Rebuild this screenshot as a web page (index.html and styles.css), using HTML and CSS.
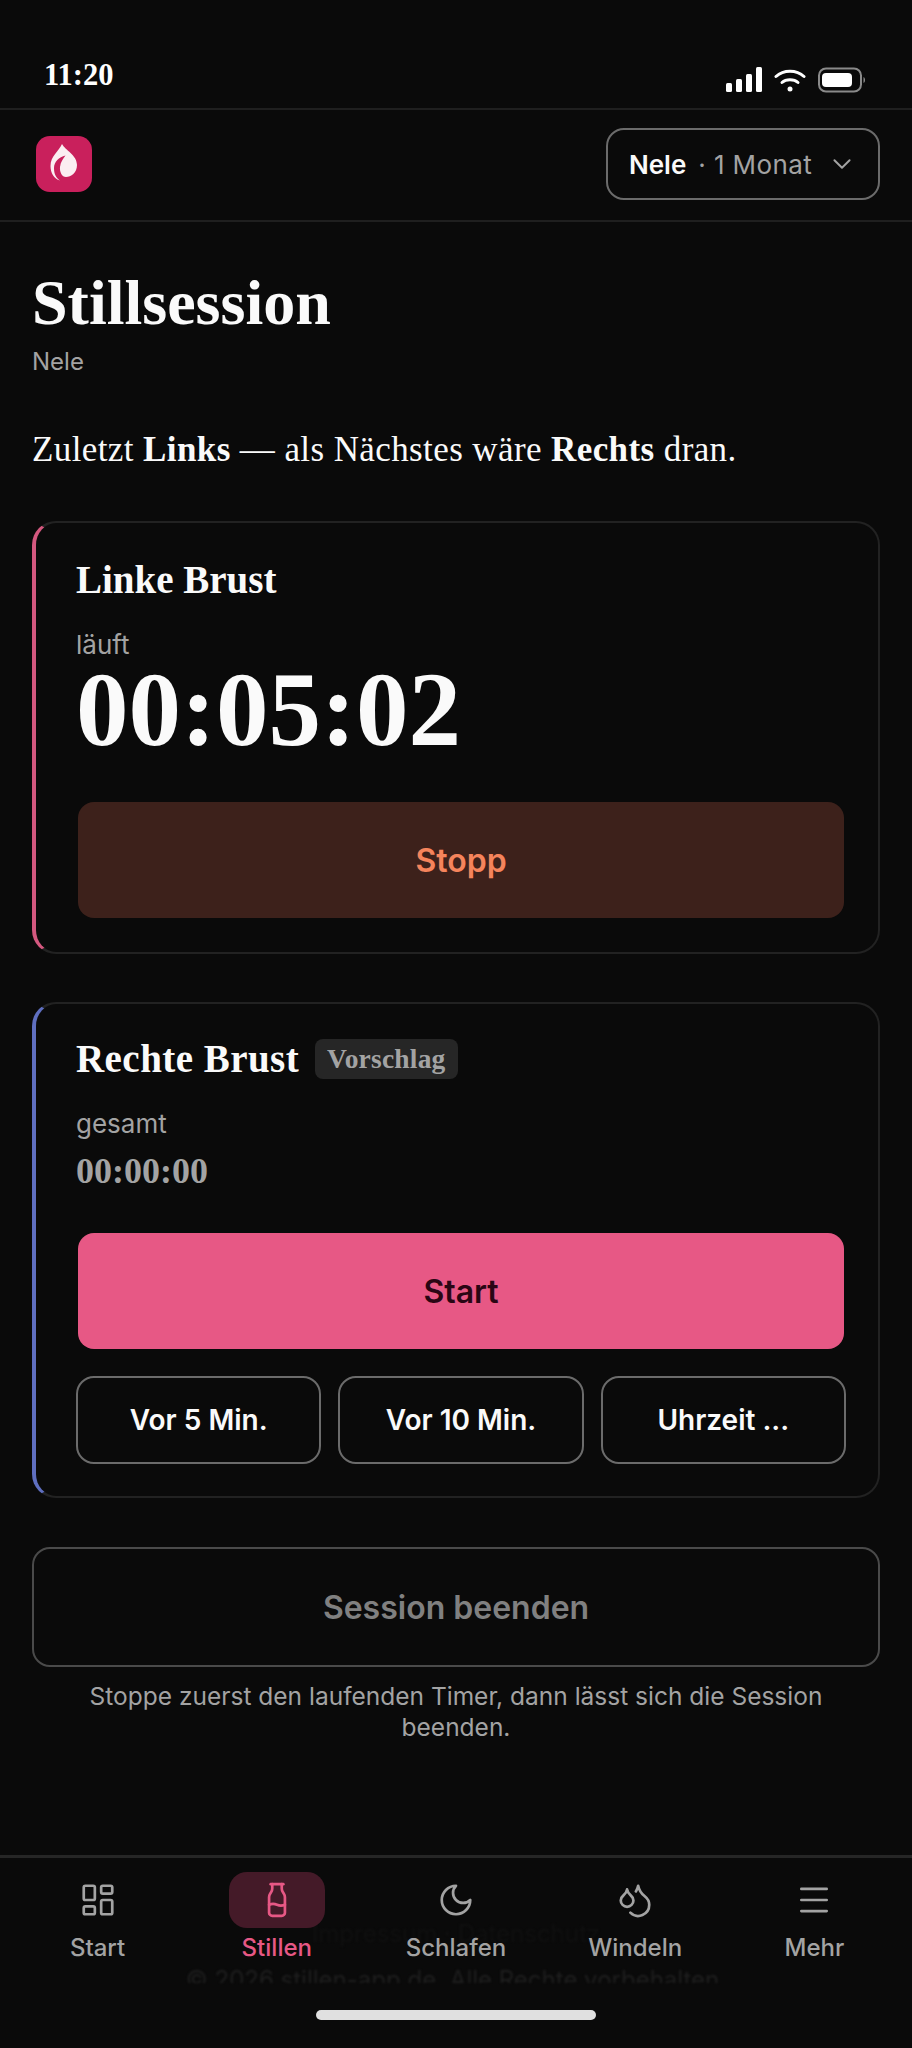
FILE: index.html
```html
<!DOCTYPE html>
<html lang="de">
<head>
  <meta charset="utf-8">
  <title>Stillsession</title>
  <link rel="stylesheet" href="styles.css">
</head>
<body>
  <div class="app">
    <div class="status-bar">
      <span class="status-time">11:20</span>
      <div class="status-icons">
        <svg width="36" height="26" viewBox="0 0 36 26" fill="#fff">
          <rect x="0" y="16" width="6" height="9" rx="1.5"/>
          <rect x="10" y="12" width="6" height="13" rx="1.5"/>
          <rect x="20" y="7" width="6" height="18" rx="1.5"/>
          <rect x="30" y="0" width="6" height="25" rx="1.5"/>
        </svg>
        <svg width="32" height="24" viewBox="0 0 32 24" fill="none" stroke="#fff" stroke-width="3" stroke-linecap="round">
          <path d="M2 8.500C9.500 1.500 22.500 1.500 30 8.500"/>
          <path d="M8 14.500C12 10.800 20 10.800 24 14.500"/>
          <circle cx="16" cy="21" r="2.500" fill="#fff" stroke="none"/>
        </svg>
        <svg width="48" height="26" viewBox="0 0 48 26" fill="none">
          <rect x="1" y="1.500" width="42" height="23" rx="7" stroke="#8a8a8a" stroke-width="2"/>
          <rect x="4" y="6" width="30" height="14" rx="4" fill="#fff"/>
          <path d="M45.500 10v6c1-.5 1.500-1.500 1.500-3s-.5-2.500-1.500-3z" fill="#8a8a8a"/>
        </svg>
      </div>
    </div>

    <header class="top-bar">
      <div class="logo">
        <svg width="56" height="56" viewBox="0 0 56 56">
          <path d="M26 8C29 14 41 19 41 29C41 37 35 41 30 41C26 41 23.500 36 24 31C24.500 26 27 23 29.500 19.500C23 21 18 26 18 32C18 38 20 42 24 44.500C18 43 14.500 37 14.500 30C14.500 20 23 15 26 8Z" fill="#fbeef2"/>
        </svg>
      </div>
      <button class="child-picker">
        <span class="child-name">Nele</span>
        <span class="child-age">· 1 Monat</span>
        <svg width="26" height="26" viewBox="0 0 24 24" fill="none" stroke="#a3a3a3" stroke-width="1.800" stroke-linecap="round" stroke-linejoin="round"><path d="m5 8.500 7 7 7-7"/></svg>
      </button>
    </header>

    <main class="content">
      <h1>Stillsession</h1>
      <p class="subtitle">Nele</p>
      <p class="hint">Zuletzt <b>Links</b> — als Nächstes wäre <b>Rechts</b> dran.</p>

      <section class="card card-left">
        <h2>Linke Brust</h2>
        <div class="timer-label">läuft</div>
        <div class="timer-big">00:05:02</div>
        <button class="btn btn-stop">Stopp</button>
      </section>

      <section class="card card-right">
        <h2>Rechte Brust <span class="tag">Vorschlag</span></h2>
        <div class="timer-label">gesamt</div>
        <div class="timer-small">00:00:00</div>
        <button class="btn btn-start">Start</button>
        <div class="quick-buttons">
          <button class="btn-quick">Vor 5 Min.</button>
          <button class="btn-quick">Vor 10 Min.</button>
          <button class="btn-quick">Uhrzeit ...</button>
        </div>
      </section>

      <button class="btn-end">Session beenden</button>
      <p class="end-note">Stoppe zuerst den laufenden Timer, dann lässt sich die Session beenden.</p>
    </main>

    <nav class="bottom-nav">
      <div class="ghost-footer">
        <span class="ghost-link">Impressum · Datenschutz</span>
        <span>© 2026 stillen-app.de. Alle Rechte vorbehalten.</span>
      </div>
      <div class="nav-items">
        <a class="nav-item">
          <span class="nav-icon">
            <svg class="icon" viewBox="0 0 24 24"><rect x="3" y="3" width="7" height="9" rx="1"/><rect x="14" y="3" width="7" height="5" rx="1"/><rect x="14" y="12" width="7" height="9" rx="1"/><rect x="3" y="16" width="7" height="5" rx="1"/></svg>
          </span>
          Start
        </a>
        <a class="nav-item active">
          <span class="nav-icon">
            <svg class="icon" viewBox="0 0 24 24"><path d="M8 2h8"/><path d="M9 2v2.789a4 4 0 0 1-.672 2.219l-.656.984A4 4 0 0 0 7 10.212V20a2 2 0 0 0 2 2h6a2 2 0 0 0 2-2v-9.789a4 4 0 0 0-.672-2.219l-.656-.984A4 4 0 0 1 15 4.788V2"/><path d="M7 15a6.472 6.472 0 0 1 5 0 6.470 6.470 0 0 0 5 0"/></svg>
          </span>
          Stillen
        </a>
        <a class="nav-item">
          <span class="nav-icon">
            <svg class="icon" viewBox="0 0 24 24"><path d="M12 3a6 6 0 0 0 9 9 9 9 0 1 1-9-9Z"/></svg>
          </span>
          Schlafen
        </a>
        <a class="nav-item">
          <span class="nav-icon">
            <svg class="icon" viewBox="0 0 24 24"><path d="M7 16.300c2.200 0 4-1.830 4-4.050 0-1.160-.57-2.260-1.710-3.190S7.290 6.750 7 5.300c-.29 1.450-1.140 2.840-2.290 3.760S3 11.100 3 12.250c0 2.220 1.800 4.050 4 4.050z"/><path d="M12.560 6.600A10.970 10.970 0 0 0 14 3.020c.5 2.500 2 4.900 4 6.500s3 3.500 3 5.500a6.980 6.980 0 0 1-11.910 4.970"/></svg>
          </span>
          Windeln
        </a>
        <a class="nav-item">
          <span class="nav-icon">
            <svg class="icon" viewBox="0 0 24 24"><path d="M4 5h16"/><path d="M4 12h16"/><path d="M4 19h16"/></svg>
          </span>
          Mehr
        </a>
      </div>
      <div class="home-indicator"></div>
    </nav>
  </div>
</body>
</html>
```

FILE: styles.css
```css
* {
  box-sizing: border-box;
}

html,
body {
  margin: 0;
  padding: 0;
  background-color: #0a0a0a;
}

body {
  font-family: Inter, "Liberation Sans", sans-serif;
  color: #fafafa;
}

button {
  font-family: inherit;
  cursor: pointer;
}

.app {
  width: 912px;
  height: 2048px;
  display: flex;
  flex-direction: column;
  overflow: hidden;
}

/* status bar */
.status-bar {
  height: 110px;
  padding: 57px 46px 0 44px;
  display: flex;
  justify-content: space-between;
  align-items: flex-start;
  border-bottom: 2px solid #1f1f1f;
}

.status-time {
  font-family: "Liberation Serif", serif;
  font-weight: 700;
  font-size: 30.5px;
  line-height: 36px;
  color: #fff;
}

.status-icons {
  display: flex;
  align-items: center;
  gap: 12px;
  margin-top: 10px;
}

/* header */
.top-bar {
  height: 112px;
  padding: 0 32px 2px 36px;
  display: flex;
  justify-content: space-between;
  align-items: center;
  border-bottom: 2px solid #1f1f1f;
}

.logo {
  width: 56px;
  height: 56px;
  border-radius: 14px;
  background-color: #c9205c;
}

.logo svg {
  display: block;
}

.child-picker {
  width: 274px;
  height: 72px;
  padding: 0 23px 0 21px;
  display: flex;
  align-items: center;
  background: none;
  border: 2px solid #6b6b6b;
  border-radius: 18px;
  font-size: 26px;
}

.child-name {
  font-weight: 600;
  color: #fafafa;
}

.child-age {
  margin-left: 12px;
  letter-spacing: 0.4px;
  color: #a3a3a3;
}

.child-picker svg {
  margin-left: auto;
}

/* page content */
.content {
  flex: 1;
  padding: 0 32px;
}

h1 {
  margin: 45px 0 0;
  font-family: "Liberation Serif", serif;
  font-weight: 700;
  font-size: 64px;
  line-height: 72px;
  color: #fafafa;
}

.subtitle {
  margin: 7px 0 0;
  font-size: 24px;
  line-height: 32px;
  color: #a3a3a3;
}

.hint {
  margin: 51px 0 0;
  font-family: "Liberation Serif", serif;
  font-size: 35px;
  letter-spacing: 0.4px;
  line-height: 42px;
  color: #fafafa;
}

/* cards */
.card {
  margin-top: 50px;
  padding: 35px 32px 32px 40px;
  border: 2px solid #222;
  border-left-width: 4px;
  border-radius: 24px;
}

.card-left {
  border-left-color: #d4587f;
}

.card-right {
  margin-top: 48px;
  padding-top: 33px;
  border-left-color: #5f6fc0;
}

h2 {
  margin: 0;
  font-family: "Liberation Serif", serif;
  font-weight: 700;
  font-size: 39px;
  line-height: 44px;
  color: #fafafa;
  display: flex;
  align-items: center;
  gap: 16px;
}

.card-right h2 {
  letter-spacing: 0.45px;
}

.tag {
  padding: 0 12px;
  height: 40px;
  display: inline-flex;
  align-items: center;
  border-radius: 8px;
  background-color: #262626;
  color: #a3a3a3;
  font-size: 27.5px;
  letter-spacing: 0.2px;
  font-weight: 700;
}

.timer-label {
  margin-top: 26px;
  font-size: 26px;
  line-height: 34px;
  color: #a3a3a3;
}

.timer-big {
  font-family: "Liberation Serif", serif;
  font-weight: 700;
  font-size: 105px;
  line-height: 96px;
  color: #fafafa;
}

.timer-small {
  margin-top: 8px;
  font-family: "Liberation Serif", serif;
  font-weight: 700;
  font-size: 36px;
  line-height: 44px;
  color: #a3a3a3;
}

.btn {
  display: block;
  width: 100%;
  height: 120px;
  margin-top: 42px;
  border: 2px solid transparent;
  background-clip: padding-box;
  border-radius: 18px;
  font-size: 32px;
  font-weight: 600;
}

.card-right .btn {
  margin-top: 38px;
}

.btn-stop {
  background-color: #3d211b;
  color: #f5845c;
}

.btn-start {
  background-color: #e75885;
  color: #2a0614;
}

.quick-buttons {
  margin-top: 25px;
  display: grid;
  grid-template-columns: repeat(3, 1fr);
  gap: 17px;
}

.btn-quick {
  height: 88px;
  background: none;
  border: 2px solid #6b6b6b;
  border-radius: 18px;
  font-size: 28px;
  font-weight: 600;
  color: #fafafa;
}

.btn-end {
  display: block;
  width: 100%;
  height: 120px;
  margin-top: 49px;
  background: none;
  border: 2px solid #4a4a4a;
  border-radius: 18px;
  font-size: 32px;
  font-weight: 600;
  color: #808080;
}

.end-note {
  margin: 14px 0 0;
  padding: 0 30px;
  font-size: 24.5px;
  line-height: 31px;
  text-align: center;
  color: #a3a3a3;
}

/* bottom nav */
.bottom-nav {
  position: relative;
  height: 193px;
  border-top: 3px solid #262626;
  overflow: hidden;
}

.ghost-footer {
  position: absolute;
  left: 0;
  right: 0;
  top: 62px;
  height: 63px;
  overflow: hidden;
  display: flex;
  flex-direction: column;
  align-items: center;
  gap: 18px;
  font-size: 24px;
  line-height: 28px;
  color: #1f1f1f;
  filter: blur(1px);
}

.ghost-link {
  color: #101010;
}

.nav-items {
  position: relative;
  padding: 14px 8px 0;
  display: grid;
  grid-template-columns: repeat(5, 1fr);
}

.nav-item {
  display: flex;
  flex-direction: column;
  align-items: center;
  font-size: 24px;
  font-weight: 500;
  line-height: 30px;
  color: #a3a3a3;
}

.nav-icon {
  width: 96px;
  height: 56px;
  margin-bottom: 5px;
  border-radius: 18px;
  display: flex;
  align-items: center;
  justify-content: center;
}

.icon {
  width: 38px;
  height: 38px;
  fill: none;
  stroke: currentColor;
  stroke-width: 1.700;
  stroke-linecap: round;
  stroke-linejoin: round;
}

.nav-item.active {
  color: #e75885;
}

.nav-item.active .nav-icon {
  background-color: #441a28;
}

.home-indicator {
  position: absolute;
  left: 316px;
  top: 152px;
  width: 280px;
  height: 10px;
  border-radius: 5px;
  background-color: #e0e0e0;
}
```
